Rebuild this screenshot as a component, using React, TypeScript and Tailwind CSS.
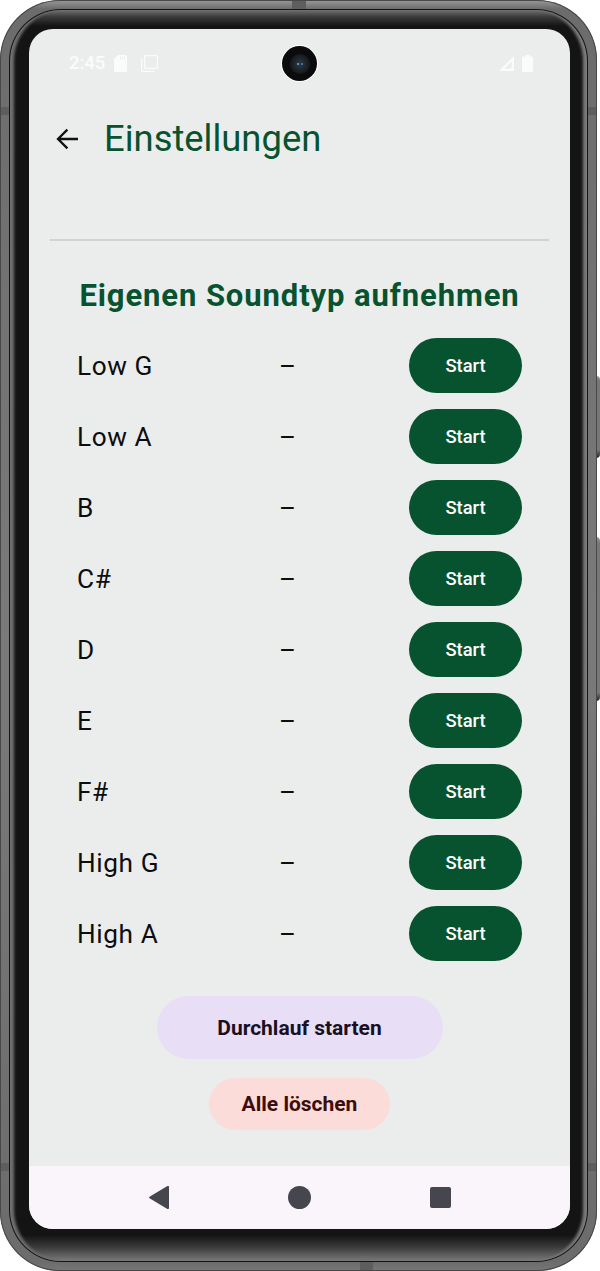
const notes = ["Low G", "Low A", "B", "C#", "D", "E", "F#", "High G", "High A"];

function Row({ name }: { name: string }) {
  return (
    <div className="flex h-[55px] items-center pl-[48px] pr-[48px]">
      <span className="w-[202px] pt-[2px] text-[26.2px] tracking-[0.6px] text-[#0d0d0d]">{name}</span>
      <span className="pt-[1px] text-[25.8px] text-[#0d0d0d]">–</span>
      <button className="ml-auto flex h-[55px] w-[113px] items-center justify-center rounded-full bg-[#07532f] text-[18.4px] font-medium text-white">
        Start
      </button>
    </div>
  );
}

function Tick({ className }: { className: string }) {
  return <div className={"absolute bg-[#5e5e5e] " + className} />;
}

export default function App() {
  return (
    <div className="relative h-[1271px] w-[600px] bg-white font-['Roboto',sans-serif]">
      {/* side buttons */}
      <div className="absolute left-[596px] top-[376px] h-[82px] w-[4px] rounded-r-sm bg-[linear-gradient(180deg,#999,#777_6%,#777_90%,#222)]" />
      <div className="absolute left-[596px] top-[537px] h-[164px] w-[4px] rounded-r-sm bg-[linear-gradient(180deg,#999,#777_4%,#777_95%,#222)]" />
      {/* phone body */}
      <div className="relative h-full w-[597px] rounded-[60px] bg-[linear-gradient(180deg,#9a9a9a,#6c6c6c_0.7%,#7a7a7a_50%,#6c6c6c_99.3%,#777)] p-[9px] shadow-[inset_0_0_0_1px_#484848]">
        <Tick className="left-[292px] top-[1px] h-[8px] w-[14px]" />
        <Tick className="left-[360px] bottom-[1px] h-[8px] w-[13px]" />
        <Tick className="left-[1px] top-[107px] h-[8px] w-[8px]" />
        <Tick className="right-[1px] top-[107px] h-[8px] w-[8px]" />
        <Tick className="left-[1px] bottom-[100px] h-[8px] w-[8px]" />
        <Tick className="right-[1px] bottom-[100px] h-[8px] w-[8px]" />
        <div className="h-full rounded-[52px] bg-[#141414] p-[1px]">
          <div className="h-full rounded-[51px] bg-[linear-gradient(180deg,#707070_0,#3a3a3a_7px,#141414_16px,#141414_calc(100%-26px),#3a3a3a_calc(100%-14px),#7a7a7a_100%)] p-[19px] shadow-[inset_5px_0_3px_-1px_#707070,inset_-5px_0_3px_-1px_#7c7c7c]">
            <div className="relative flex h-[1200px] w-[541px] flex-col overflow-hidden rounded-[24px] bg-[#ebeded]">
              {/* status bar */}
              <div className="flex h-[68px] shrink-0 items-center pl-[40px] pr-[37px]">
                <span className="w-[45px] text-[18.4px] font-medium text-[#fbfbfb]">2:45</span>
                <svg width="13" height="17" viewBox="0 0 13 17" fill="#fbfbfb">
                  <path d="M4 0H11.5A1.5 1.5 0 0 1 13 1.5V15.5A1.5 1.5 0 0 1 11.5 17H1.5A1.5 1.5 0 0 1 0 15.5V4Z" />
                  <path d="M6 1.5h1v3H6zM8 1.5h1v3H8zM10 1.5h1v3h-1z" fill="#ebeded" />
                </svg>
                <svg className="ml-[14px]" width="17" height="17" viewBox="0 0 17 17" fill="none" stroke="#fbfbfb" strokeWidth="1.2">
                  <rect x="3.6" y="0.6" width="12.8" height="12.8" rx="1" />
                  <path d="M0.6 3.5V15.4a1 1 0 0 0 1 1H13.5" />
                </svg>
                <svg className="ml-auto" width="15" height="15" viewBox="0 0 15 15">
                  <path d="M15 0V15H0Z" fill="#fbfbfb" />
                  <path d="M12.8 5.4V12.8H5.4Z" fill="#ebeded" />
                  <path d="M12.8 9.5V12.8H9.5Z" fill="#f4f4f4" />
                </svg>
                <svg className="ml-[8px]" width="11" height="17" viewBox="0 0 11 17" fill="#fbfbfb">
                  <path d="M3.5 0H7.5V1.5H9.8A1.2 1.2 0 0 1 11 2.7V15.8A1.2 1.2 0 0 1 9.8 17H1.2A1.2 1.2 0 0 1 0 15.8V2.7A1.2 1.2 0 0 1 1.2 1.5H3.5Z" />
                </svg>
              </div>
              {/* camera */}
              <div className="absolute left-[253px] top-[17px] flex h-[35px] w-[35px] items-center justify-center rounded-full bg-[#0b0b0d] ring-1 ring-white">
                <div className="flex h-[20px] w-[20px] items-center justify-center gap-[2px] rounded-full bg-[radial-gradient(circle,#2c3a48,#1a1d20_60%,#0f0f11)]">
                  <span className="h-[2px] w-[2px] rounded-full bg-[#5fb6b6]" />
                  <span className="h-[2px] w-[2px] rounded-full bg-[#4a7fd0]" />
                </div>
              </div>
              {/* app bar */}
              <div className="flex h-[84px] shrink-0 items-center pl-[26px]">
                <svg width="24" height="24" viewBox="0 0 24 24" fill="none" stroke="#111" strokeWidth="2.3">
                  <path d="M23 12H3M12.4 2.6 3 12l9.4 9.4" />
                </svg>
                <span className="ml-[25px] pt-[1px] text-[36.4px] leading-none text-[#07532f]">Einstellungen</span>
              </div>
              {/* divider */}
              <div className="mx-[21px] mt-[58px] h-[2px] shrink-0 bg-[#d2d1d6]" />
              {/* heading */}
              <div className="mt-[38px] text-center text-[31px] font-bold leading-[34px] tracking-[0.9px] text-[#07532f]">
                Eigenen Soundtyp aufnehmen
              </div>
              {/* rows */}
              <div className="mt-[25px] flex flex-col gap-[16px]">
                {notes.map((n) => (
                  <Row key={n} name={n} />
                ))}
              </div>
              {/* actions */}
              <div className="mt-[35px] flex flex-col items-center gap-[19px]">
                <button className="h-[63px] w-[286px] rounded-full bg-[#e8def6] pt-[2px] text-[21px] font-bold text-[#1a1024]">
                  Durchlauf starten
                </button>
                <button className="h-[52px] w-[181px] rounded-full bg-[#fbdcd9] pt-[1px] text-[21px] font-bold text-[#3c0d0b]">
                  Alle löschen
                </button>
              </div>
              {/* nav bar */}
              <div className="mt-auto flex h-[63px] shrink-0 items-center justify-center bg-[#f9f5fb]">
                <div className="flex w-[141px] justify-center">
                  <svg width="20" height="23" viewBox="0 0 20 23" fill="#46464f">
                    <path d="M18 0.3a1.2 1.2 0 0 1 2 1.2V21.5a1.2 1.2 0 0 1-2 1.2L0.5 12.2a1 1 0 0 1 0-1.5Z" />
                  </svg>
                </div>
                <div className="flex w-[141px] justify-center">
                  <div className="h-[23px] w-[23px] rounded-full bg-[#46464f]" />
                </div>
                <div className="flex w-[141px] justify-center">
                  <div className="h-[21px] w-[21px] rounded-[2px] bg-[#46464f]" />
                </div>
              </div>
            </div>
          </div>
        </div>
      </div>
    </div>
  );
}
